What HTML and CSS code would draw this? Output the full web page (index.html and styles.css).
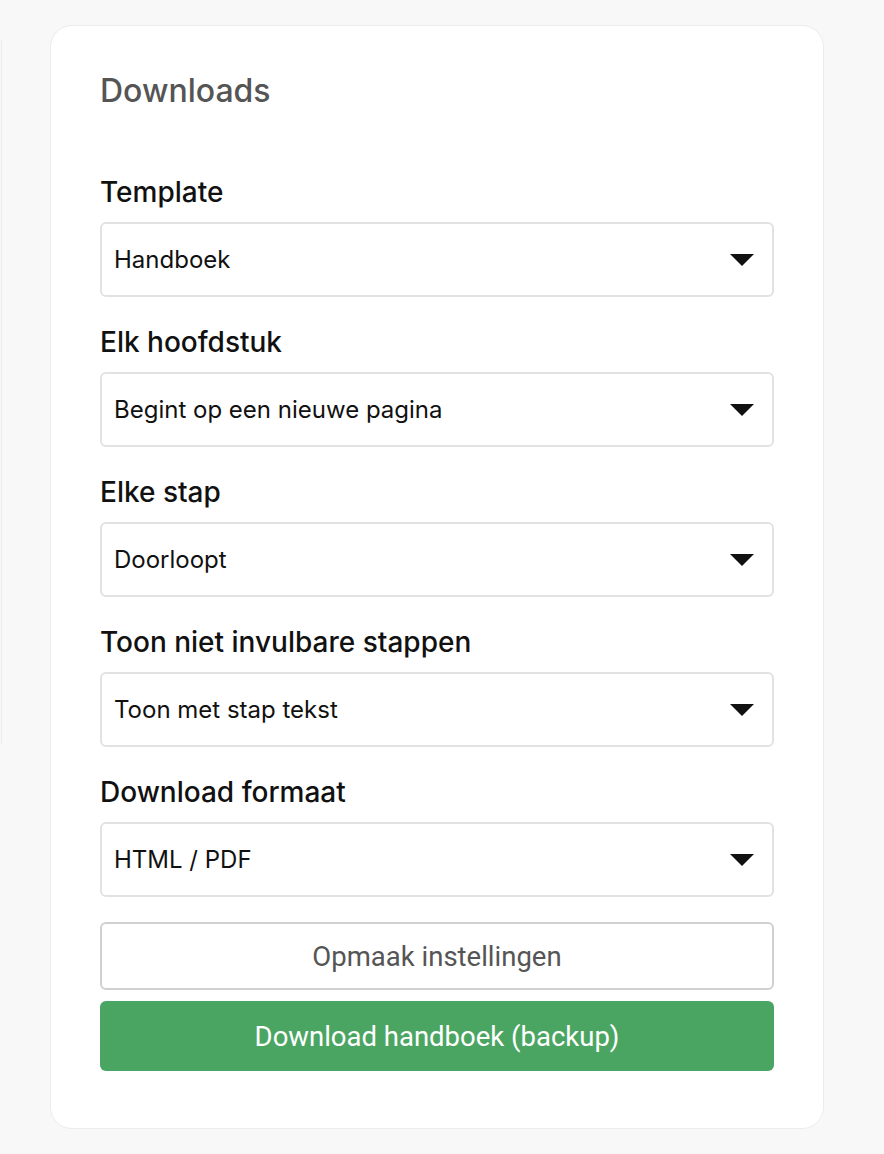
FILE: index.html
```html
<html>
<head><title>Downloads</title>
<meta name="viewport" content="width=device-width, initial-scale=1.0" />
<meta content="text/html;charset=utf-8" http-equiv="Content-Type" />
<link rel="stylesheet" href="styles.css">
</head>
<body>
<div class="page">
	<div class="side"></div>
	<div class="card">
		<h2>Downloads</h2>

		<div class="field">
			<label for="template">Template</label>
			<div class="select">
				<select id="template">
					<option>Handboek</option>
				</select>
			</div>
		</div>

		<div class="field">
			<label for="hoofdstuk">Elk hoofdstuk</label>
			<div class="select">
				<select id="hoofdstuk">
					<option>Begint op een nieuwe pagina</option>
				</select>
			</div>
		</div>

		<div class="field">
			<label for="stap">Elke stap</label>
			<div class="select">
				<select id="stap">
					<option>Doorloopt</option>
				</select>
			</div>
		</div>

		<div class="field">
			<label for="invulbaar">Toon niet invulbare stappen</label>
			<div class="select">
				<select id="invulbaar">
					<option>Toon met stap tekst</option>
				</select>
			</div>
		</div>

		<div class="field">
			<label for="formaat">Download formaat</label>
			<div class="select">
				<select id="formaat">
					<option>HTML / PDF</option>
				</select>
			</div>
		</div>

		<button class="btn btn-outline">Opmaak instellingen</button>
		<button class="btn btn-green">Download handboek (backup)</button>
	</div>
</div>
</body>
</html>
```

FILE: styles.css
```css
body{
	padding:0;
	margin:0;
	background-color:#f7f8f7;
	font-family: Inter, "Noto Sans", sans-serif;
	color:#111;
}

.page{
	display:flex;
	align-items:flex-start;
	padding-top:25px;
}

.side{
	width:1px;
	height:705px;
	margin-top:15px;
	border-right:1px solid #ececec;
}

.card{
	margin-left:48px;
	width:674px;
	padding:45px 49px 57px 49px;
	background:white;
	border:1.5px solid #ececec;
	border-radius:22px;
}

h2{
	margin:0 0 65px 0;
	font-size:32px;
	font-weight:500;
	color:#555;
	line-height:39px;
}

.field{
	margin-bottom:28px;
}

.field:last-of-type{
	margin-bottom:25px;
}

label{
	display:block;
	font-size:28px;
	font-weight:500;
	line-height:34px;
	margin-bottom:13px;
	color:#111;
}

.select{
	position:relative;
}

.select select{
	appearance:none;
	-webkit-appearance:none;
	box-sizing:border-box;
	width:100%;
	height:75px;
	padding:0 60px 0 12px;
	font-family: Inter, sans-serif;
	font-size:24px;
	color:#111;
	background:white;
	border:2px solid #e2e2e2;
	border-radius:6px;
}

.select::after{
	content:"";
	position:absolute;
	right:20px;
	top:32px;
	border-left:12px solid transparent;
	border-right:12px solid transparent;
	border-top:12px solid #111;
	pointer-events:none;
}

.btn{
	display:block;
	box-sizing:border-box;
	width:100%;
	border-radius:6px;
	font-family: Roboto, sans-serif;
	font-size:27.5px;
	cursor:pointer;
}

.btn-outline{
	height:68px;
	background:white;
	border:2px solid #d0d0d0;
	color:#555;
	margin-bottom:11px;
}

.btn-green{
	height:70px;
	background:#4ba562;
	border:0;
	color:white;
}
```
